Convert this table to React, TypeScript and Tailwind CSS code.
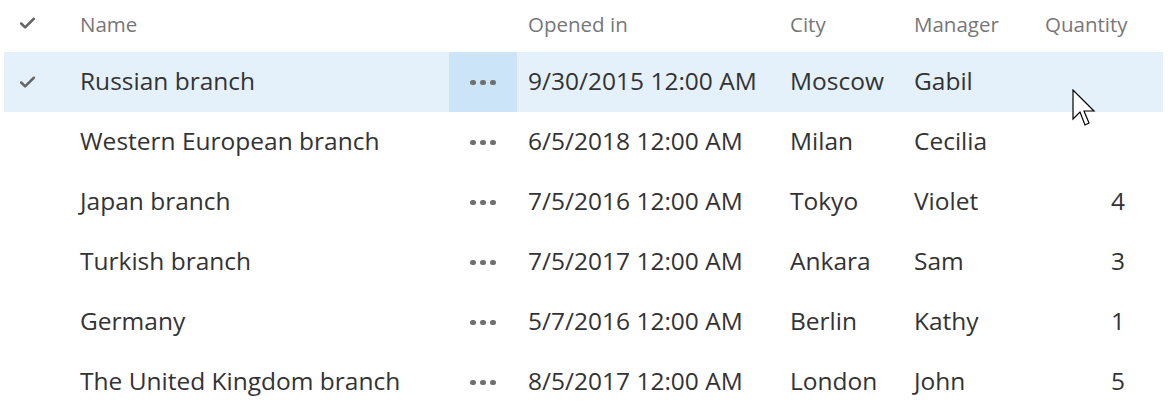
import { Check } from 'lucide-react';

const rows = [
  { name: 'Russian branch', opened: '9/30/2015 12:00 AM', city: 'Moscow', manager: 'Gabil', qty: '' },
  { name: 'Western European branch', opened: '6/5/2018 12:00 AM', city: 'Milan', manager: 'Cecilia', qty: '' },
  { name: 'Japan branch', opened: '7/5/2016 12:00 AM', city: 'Tokyo', manager: 'Violet', qty: '4' },
  { name: 'Turkish branch', opened: '7/5/2017 12:00 AM', city: 'Ankara', manager: 'Sam', qty: '3' },
  { name: 'Germany', opened: '5/7/2016 12:00 AM', city: 'Berlin', manager: 'Kathy', qty: '1' },
  { name: 'The United Kingdom branch', opened: '8/5/2017 12:00 AM', city: 'London', manager: 'John', qty: '5' },
];

const cols = 'grid w-[1159px] grid-cols-[56px_389px_68px_262px_124px_131px_129px]';

const Dots = () => (
  <div className="flex gap-[4px]">
    <span className="w-[6px] h-[5px] rounded-full bg-[#6f6f6f]" />
    <span className="w-[6px] h-[5px] rounded-full bg-[#6f6f6f]" />
    <span className="w-[6px] h-[5px] rounded-full bg-[#6f6f6f]" />
  </div>
);

const App = () => {
  return (
    <div
      className="relative w-[1171px] h-[411px] bg-white overflow-hidden pl-[4px]"
      style={{ fontFamily: '"Open Sans", "Noto Sans", sans-serif' }}
    >
      <div className={`${cols} h-[52px] items-center text-[20.5px] text-[#777]`}>
        <div className="pl-[14px] pb-[6px]">
          <Check size={19} strokeWidth={3.2} className="text-[#666]" />
        </div>
        <div className="pl-[20px] pb-[4px]">Name</div>
        <div />
        <div className="pl-[11px] pb-[4px]">Opened in</div>
        <div className="pl-[11px] pb-[4px]">City</div>
        <div className="pl-[11px] pb-[4px]">Manager</div>
        <div className="pl-[11px] pb-[4px] whitespace-nowrap">Quantity</div>
      </div>
      {rows.map((r, i) => (
        <div
          key={i}
          className={`${cols} h-[60px] items-center text-[24.5px] text-[#333] ${
            i === 0 ? 'bg-[#e5f1fa]' : ''
          }`}
        >
          <div className="pl-[14px]">
            {i === 0 && <Check size={19} strokeWidth={3.2} className="text-[#666]" />}
          </div>
          <div className="pl-[20px] pb-[2px] whitespace-nowrap">{r.name}</div>
          <div className={`h-full flex items-center justify-center ${i === 0 ? 'bg-[#cce4f7]' : ''}`}>
            <Dots />
          </div>
          <div className="pl-[11px] pb-[2px] whitespace-nowrap">{r.opened}</div>
          <div className="pl-[11px] pb-[2px]">{r.city}</div>
          <div className="pl-[11px] pb-[2px]">{r.manager}</div>
          <div className="pr-[38px] pb-[2px] text-right">{r.qty}</div>
        </div>
      ))}
      <svg
        className="absolute left-[1072px] top-[89px]"
        width="28"
        height="40"
        viewBox="0 0 28 40"
      >
        <path
          d="M1 1 L1 30 L8 23 L13 36 L17 34 L12 22 L22 22 Z"
          fill="white"
          stroke="black"
          strokeWidth="1.2"
          strokeLinejoin="miter"
        />
      </svg>
    </div>
  );
};

export default App;
